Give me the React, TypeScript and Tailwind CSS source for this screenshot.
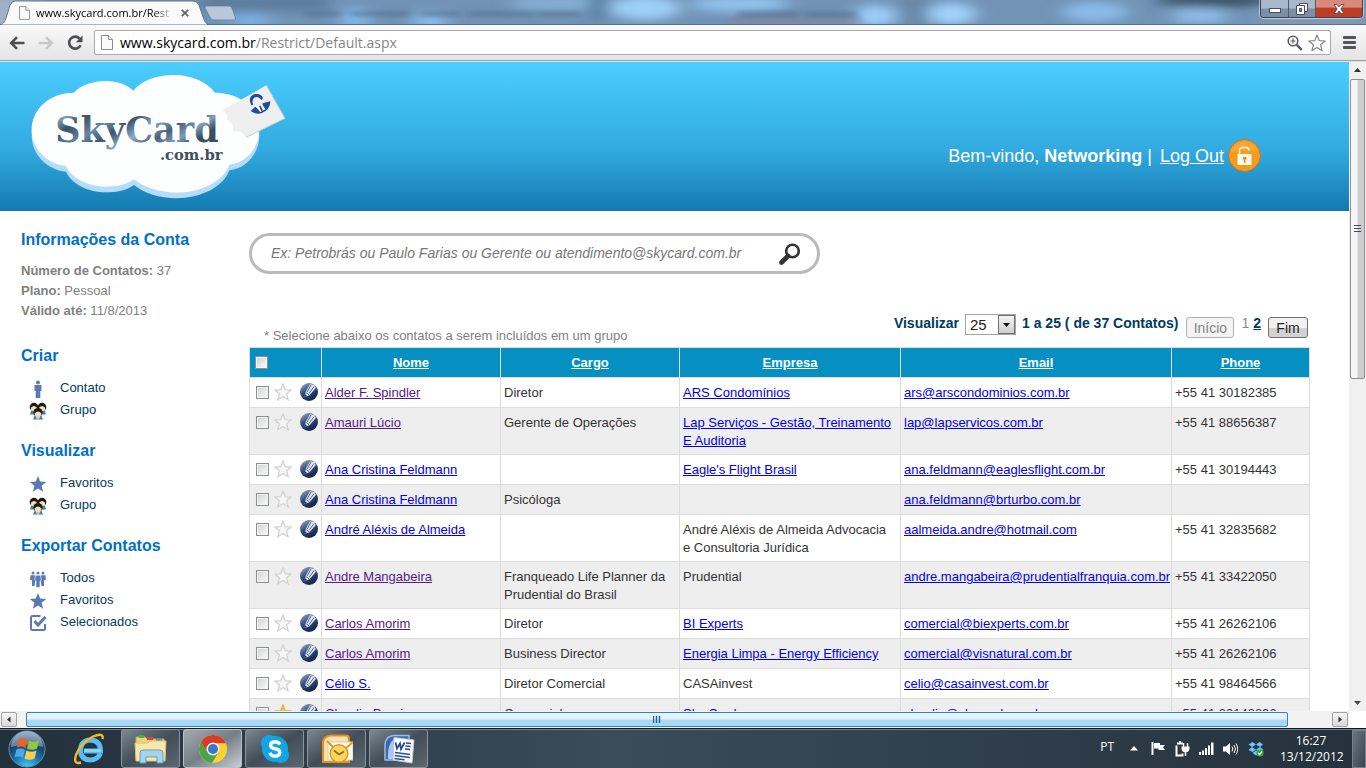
import type { ReactNode } from 'react';

interface Contact {
  name: string;
  role?: string;
  company?: string;
  companyLink?: boolean;
  email: string;
  phone: string;
  visited?: boolean;
  favourite?: boolean;
}

const contacts: Contact[] = [
  { name: 'Alder F. Spindler', role: 'Diretor', company: 'ARS Condomínios', companyLink: true, email: 'ars@arscondominios.com.br', phone: '+55 41 30182385', visited: true },
  { name: 'Amauri Lúcio', role: 'Gerente de Operações', company: 'Lap Serviços - Gestão, Treinamento E Auditoria', companyLink: true, email: 'lap@lapservicos.com.br', phone: '+55 41 88656387', visited: true },
  { name: 'Ana Cristina Feldmann', company: "Eagle's Flight Brasil", companyLink: true, email: 'ana.feldmann@eaglesflight.com.br', phone: '+55 41 30194443' },
  { name: 'Ana Cristina Feldmann', role: 'Psicóloga', email: 'ana.feldmann@brturbo.com.br', phone: '' },
  { name: 'André Aléxis de Almeida', company: 'André Aléxis de Almeida Advocacia e Consultoria Jurídica', email: 'aalmeida.andre@hotmail.com', phone: '+55 41 32835682' },
  { name: 'Andre Mangabeira', role: 'Franqueado Life Planner da Prudential do Brasil', company: 'Prudential', email: 'andre.mangabeira@prudentialfranquia.com.br', phone: '+55 41 33422050', visited: true },
  { name: 'Carlos Amorim', role: 'Diretor', company: 'BI Experts', companyLink: true, email: 'comercial@biexperts.com.br', phone: '+55 41 26262106', visited: true },
  { name: 'Carlos Amorim', role: 'Business Director', company: 'Energia Limpa - Energy Efficiency', companyLink: true, email: 'comercial@visnatural.com.br', phone: '+55 41 26262106', visited: true },
  { name: 'Célio S.', role: 'Diretor Comercial', company: 'CASAinvest', email: 'celio@casainvest.com.br', phone: '+55 41 98464566' },
  { name: 'Claudio Pereira', role: 'Comercial', company: 'Sky Card', companyLink: true, email: 'claudio@skycard.com.br', phone: '+55 41 30143896', visited: true, favourite: true },
];

const STAR = 'M9 1 L11.2 6.6 L17.2 7 L12.6 10.8 L14.1 16.7 L9 13.4 L3.9 16.7 L5.4 10.8 L0.8 7 L6.8 6.6 Z';
const CLOUD =
  'M95 210C95 150 145 98 222 98C240 76 280 63 318 63C350 63 382 74 400 92C425 62 470 45 520 45C575 45 620 65 645 98C720 98 778 145 778 210C778 260 740 310 688 314C670 365 600 398 530 398C480 398 430 382 402 358C380 374 350 380 318 380C265 380 215 355 198 318C140 312 95 265 95 210Z';

/* ---------- browser frame ---------- */

function PageIcon({ className }: { className?: string }) {
  return (
    <svg viewBox="0 0 12 15" className={className} fill="#fafafa" stroke="#8d8d8d">
      <path d="M.5.5h7l4 4v10H.5z" />
      <path d="M7.5.5v4h4" />
    </svg>
  );
}

function GlassBackdrop() {
  return (
    <svg className="absolute inset-0 h-full w-full" viewBox="0 0 1366 25" preserveAspectRatio="none">
      <defs>
        <filter id="glass" x="-20%" y="-80%" width="140%" height="260%">
          <feGaussianBlur stdDeviation="9 5" />
        </filter>
        <filter id="smudge" x="-20%" y="-80%" width="140%" height="260%">
          <feGaussianBlur stdDeviation="4 2" />
        </filter>
      </defs>
      <rect width="1366" height="25" fill="#7193b6" />
      <g filter="url(#glass)">
        <rect x="-20" y="-5" width="60" height="35" fill="#a2b0c6" />
        <rect x="200" y="-5" width="130" height="16" fill="#5d7d9d" />
        <ellipse cx="250" cy="20" rx="22" ry="6" fill="#7fb5ea" />
        <ellipse cx="355" cy="18" rx="16" ry="10" fill="#86bbee" />
        <ellipse cx="430" cy="20" rx="18" ry="8" fill="#8cc0ee" />
        <ellipse cx="560" cy="4" rx="50" ry="8" fill="#85aed6" />
        <rect x="590" y="-5" width="18" height="24" fill="#54789c" />
        <ellipse cx="645" cy="8" rx="36" ry="12" fill="#9fcff8" />
        <ellipse cx="740" cy="4" rx="50" ry="8" fill="#92c3ee" />
        <ellipse cx="875" cy="16" rx="22" ry="11" fill="#9ccdf8" />
        <rect x="900" y="-5" width="28" height="34" fill="#6887a6" />
        <ellipse cx="952" cy="14" rx="24" ry="11" fill="#a2d3fb" />
        <ellipse cx="1095" cy="12" rx="34" ry="10" fill="#8bbbe8" />
        <ellipse cx="1200" cy="16" rx="28" ry="8" fill="#8fbce8" />
        <ellipse cx="1215" cy="0" rx="60" ry="7" fill="#39505f" />
        <rect x="1260" y="8" width="110" height="20" fill="#8199b4" />
      </g>
      <g filter="url(#smudge)" fill="#4e6b8a" opacity=".5">
        <rect x="304" y="11" width="38" height="6" />
        <rect x="350" y="11" width="60" height="6" />
        <rect x="420" y="11" width="40" height="6" />
        <rect x="468" y="11" width="66" height="6" />
        <rect x="537" y="11" width="44" height="6" />
        <rect x="738" y="11" width="60" height="7" />
        <rect x="804" y="11" width="54" height="7" />
        <rect x="732" y="18" width="130" height="5" fill="#8a7c98" />
      </g>
      <rect y="24" width="1366" height="1" fill="#54718f" />
    </svg>
  );
}

function TitleBar() {
  return (
    <div className="relative flex h-[25px] shrink-0 justify-between overflow-hidden">
      <GlassBackdrop />
      <div className="relative flex">
        <div className="relative flex h-[25px] w-[207px] items-center pl-[19px]">
          <svg viewBox="0 0 207 25" className="absolute inset-0 h-full w-full">
            <path d="M0 25C4 24 5 21 7 15L10 5Q12 1 15 1H193Q197 1 199 5L203 17Q205 24 209 25Z" fill="#fafafa" stroke="#5b7590" strokeWidth="1" />
          </svg>
          <PageIcon className="relative h-[14px] w-[11px]" />
          <span className="relative ml-[6px] w-[138px] text-[11px] leading-4 whitespace-nowrap text-black [mask-image:linear-gradient(to_right,black_85%,transparent)]">
            www.skycard.com.br/Rest
          </span>
          <button aria-label="Fechar aba" className="relative ml-[7px]">
            <svg viewBox="0 0 8 8" className="h-2 w-2" stroke="#666" strokeWidth="1.8">
              <path d="M.8.8l6.4 6.4M7.2.8L.8 7.2" />
            </svg>
          </button>
        </div>
        <button aria-label="Nova aba" className="-ml-[4px]">
          <svg viewBox="0 0 34 25" className="h-[25px] w-[34px]">
            <path d="M3 6h23q2 0 3 2l3.500 10q.8 2-1.500 2H11q-2.500 0-3.500-2L2 8q-.5-2 1-2z" fill="#b9c7d9" stroke="#63809d" strokeWidth=".8" />
          </svg>
        </button>
      </div>
      <div className="relative mr-[3px] flex h-[18px] rounded-b-[4px] border border-t-0 border-[#37424f] shadow-[0_0_0_1px_rgba(255,255,255,0.5)]">
        <button aria-label="Minimizar" className="flex w-[28px] items-center justify-center rounded-bl-[3px] border-r border-[#4d5d70] bg-linear-to-b from-[#a9b8ca] from-45% to-[#7c8fa6] to-55%">
          <svg viewBox="0 0 12 5" className="mt-1 h-[5px] w-3"><rect x=".5" y=".5" width="11" height="4" fill="#fff" stroke="#45505e" /></svg>
        </button>
        <button aria-label="Restaurar" className="flex w-[27px] items-center justify-center border-r border-[#4d5d70] bg-linear-to-b from-[#a9b8ca] from-45% to-[#7c8fa6] to-55%">
          <svg viewBox="0 0 12 12" className="h-3 w-3" fill="#fff" stroke="#45505e">
            <path d="M3.500.5h8v8h-8z" />
            <path d="M.5 2.500h8v9h-8z" />
            <path d="M3.500 5.500h2v3h-2z" fill="#7c8fa6" />
          </svg>
        </button>
        <button aria-label="Fechar" className="flex w-[46px] items-center justify-center rounded-br-[3px] bg-linear-to-b from-[#d98a7c] from-40% to-[#bd3e25] to-50%">
          <svg viewBox="0 0 12 10" className="h-[10px] w-3">
            <path d="M1 .5h3L6 3 8 .5h3L7.800 5 11 9.500H8L6 7 4 9.500H1L4.200 5z" fill="#fff" stroke="#5a3d40" strokeWidth=".8" />
          </svg>
        </button>
      </div>
    </div>
  );
}

function Toolbar() {
  return (
    <div className="flex h-9 shrink-0 items-center border-b border-[#a0a0a0] bg-linear-to-b from-[#fafafa] to-[#e4e4e4] pr-[10px] pl-[9px]">
      <button aria-label="Voltar" className="w-[29px]">
        <svg viewBox="0 0 16 14" className="h-[14px] w-4" fill="none" stroke="#4f4f53" strokeWidth="2.600">
          <path d="M15.500 7H3M8 1.200L2.200 7 8 12.800" />
        </svg>
      </button>
      <button aria-label="Avançar" className="w-[29px]">
        <svg viewBox="0 0 16 14" className="h-[14px] w-4" fill="none" stroke="#c9c9c9" strokeWidth="2.600">
          <path d="M.5 7H13M8 1.200L13.800 7 8 12.800" />
        </svg>
      </button>
      <button aria-label="Recarregar" className="w-[27px]">
        <svg viewBox="0 0 16 16" className="h-4 w-4">
          <path d="M12.600 3.600A6 6 0 1 0 13.600 10.200" fill="none" stroke="#4f4f53" strokeWidth="2.600" />
          <path d="M15.500.5v6.700H8.800z" fill="#4f4f53" />
        </svg>
      </button>
      <div className="flex h-[25px] flex-1 items-center rounded-[2px] border border-[#a9a9a9] bg-white pr-1 pl-[6px]">
        <PageIcon className="h-[15px] w-3" />
        <div className="ml-[7px] flex-1 text-[14px] leading-5 text-[#858585]">
          <span className="text-black">www.skycard.com.br</span>/Restrict/Default.aspx
        </div>
        <button aria-label="Zoom">
          <svg viewBox="0 0 16 16" className="h-4 w-4" fill="none" stroke="#5a5a66">
            <circle cx="6" cy="6" r="4.800" strokeWidth="1.600" />
            <path d="M6 3.500v5M3.500 6h5" strokeWidth="1.200" />
            <path d="M9.800 9.800l5 5" strokeWidth="2.400" />
          </svg>
        </button>
        <button aria-label="Adicionar aos favoritos" className="ml-[5px]">
          <svg viewBox="0 0 18 18" className="h-[18px] w-[18px]" fill="#fff" stroke="#85858c" strokeWidth="1.200" strokeLinejoin="round">
            <path d={STAR} />
          </svg>
        </button>
      </div>
      <button aria-label="Menu" className="ml-3">
        <svg viewBox="0 0 13 13" className="h-[13px] w-[13px]" fill="#55555a">
          <rect width="13" height="3" rx="1" />
          <rect y="5" width="13" height="3" rx="1" />
          <rect y="10" width="13" height="3" rx="1" />
        </svg>
      </button>
    </div>
  );
}

/* ---------- site header ---------- */

function Logo() {
  return (
    <svg viewBox="0 6 960 447" className="h-[149px] w-[320px]" role="img" aria-label="SkyCard.com.br">
      <defs>
        <linearGradient id="steel" x1="0" y1="0" x2="1" y2="0.4">
          <stop offset="0" stopColor="#5d7286" />
          <stop offset=".1" stopColor="#7fa3c4" />
          <stop offset=".22" stopColor="#3c5163" />
          <stop offset=".38" stopColor="#6688a8" />
          <stop offset=".5" stopColor="#3f566b" />
          <stop offset=".64" stopColor="#86abcd" />
          <stop offset=".78" stopColor="#4b6178" />
          <stop offset=".9" stopColor="#7c9ebd" />
          <stop offset="1" stopColor="#3b4f61" />
        </linearGradient>
      </defs>
      <path d={CLOUD} fill="#b4dcfd" transform="translate(0 17)" />
      <path d={CLOUD} fill="#fdfefe" />
      <path d="M668 150L799 76L855 175L738 232L728 220Q716 208 700 214Q702 188 680 178Q686 162 668 150Z" fill="#efeff0" />
      <path d="M799 76L855 175L738 232" fill="none" stroke="#c3cbd2" strokeWidth="3" />
      {/* little business man on the card */}
      <path d="M754 136Q742 112 762 103Q782 98 789 114L784 120Q774 106 762 114Q754 122 760 134Z" fill="#1d4da1" />
      <path d="M752 153L766 140L782 149L788 130L811 124Q811 150 784 160Q766 164 752 153Z" fill="#1d4da1" />
      <path d="M768 141L786 132L796 148L781 156Z" fill="#fff" />
      <path d="M777 138L781 136L789 151L784 154Z" fill="#1d4da1" />
      <text x="166" y="247" fill="url(#steel)" className="font-['DejaVu_Serif',serif] text-[105px] font-bold">SkyCard</text>
      <text x="480" y="299" fill="#3e4f5f" className="font-['DejaVu_Serif',serif] text-[44px] font-bold">.com.br</text>
    </svg>
  );
}

function LockBadge() {
  return (
    <svg viewBox="0 0 33 33" className="h-[33px] w-[33px]">
      <circle cx="16.500" cy="16.500" r="16" fill="#f89a1c" stroke="#a87a45" />
      <path d="M3 13A14 14 0 0 1 30 13Q16 9 3 13z" fill="#fbb04e" opacity=".6" />
      <path d="M11.500 15V11.500Q11.500 8.500 15 8.500H18Q21 8.500 21 11.500" fill="none" stroke="#fff6e0" strokeWidth="1.600" />
      <path d="M9.500 15h14v11h-14z" fill="#fffaf0" />
      <path d="M15 18h3.500v2.500h-1V24h-1.500v-3.500h-1z" fill="#f08a10" />
    </svg>
  );
}

function SiteHeader() {
  return (
    <header className="flex h-[150px] items-center justify-between border-t border-[#d3ecf8] bg-linear-to-b from-[#4bceff] via-[#31aadf] via-60% to-[#1279b0] pr-[88px]">
      <Logo />
      <div className="mt-[38px] flex items-center text-[18px] leading-6 text-white">
        <span>
          Bem-vindo, <b>Networking</b> |
        </span>
        <a href="#logout" className="ml-2 underline">Log Out</a>
        <span className="ml-1"><LockBadge /></span>
      </div>
    </header>
  );
}

/* ---------- sidebar ---------- */

function PersonIcon() {
  return (
    <svg viewBox="0 0 18 18" className="h-[18px] w-[18px]" fill="#5b7ab4">
      <circle cx="9" cy="2.500" r="1.900" />
      <path d="M5.500 5h7v6h-1.200v7H6.700v-7H5.500z" />
    </svg>
  );
}

function PeopleIcon() {
  return (
    <svg viewBox="0 0 18 18" className="h-[18px] w-[18px]" fill="#5b7ab4">
      <circle cx="4" cy="3" r="1.500" />
      <circle cx="9" cy="3" r="1.500" />
      <circle cx="14" cy="3" r="1.500" />
      <path d="M1.500 5.200h4.800v5.300L5.600 16H3V10.500L1 9.500zM11.700 5.200h4.800l.5 4.300-2 1v5.500h-2.600l-.7-5.500z" />
      <path d="M6.300 5.200h5.400l.5 5-1.200 1V17.500H7v-6.300l-1.200-1z" stroke="#fff" strokeWidth=".6" />
    </svg>
  );
}

function GroupIcon() {
  return (
    <svg viewBox="0 0 18 18" className="h-[18px] w-[18px]">
      <path d="M1 12.500h4V9H2zM17 12.500h-4V9h3zM4 17.500h10l-1.500-3.500h-7z" fill="#2b86cf" />
      <circle cx="5" cy="5" r="4.300" fill="#1e1a18" />
      <circle cx="13" cy="5" r="4.300" fill="#1e1a18" />
      <path d="M2 5.500Q5 2.500 7.800 5.500V9Q5 10.500 2 8z" fill="#fbdcae" />
      <path d="M16 5.500Q13 2.500 10.200 5.500V9Q13 10.500 16 8z" fill="#fbdcae" />
      <circle cx="9" cy="10.600" r="4.600" fill="#1e1a18" />
      <path d="M5.500 11.500Q9 7.500 12.500 11.500Q12 15.500 9 15.700Q6 15.500 5.500 11.500z" fill="#fbdcae" />
      <path d="M7 15h4l-.8 2.500H7.800z" fill="#f1c07f" />
    </svg>
  );
}

function StarIcon() {
  return (
    <svg viewBox="0 0 18 18" className="h-[18px] w-[18px]" fill="#5b7ab4">
      <path d={STAR} />
    </svg>
  );
}

function TickIcon() {
  return (
    <svg viewBox="0 0 18 18" className="h-[18px] w-[18px]" fill="none" stroke="#5b7ab4" strokeWidth="2">
      <path d="M11.500 2H3.500Q2 2 2 3.500v11Q2 16 3.500 16h11Q16 16 16 14.500V10" />
      <path d="M5.500 7l3.500 4 7.500-8" strokeWidth="3" />
    </svg>
  );
}

function SideLink({ icon, children }: { icon: ReactNode; children: ReactNode }) {
  return (
    <li>
      <a href="#menu" className="flex h-[22px] items-center gap-[13px] pl-2 text-[#003a63]">
        <span className="mt-[2px]">{icon}</span>
        {children}
      </a>
    </li>
  );
}

function SideSection({ title, children }: { title: string; children: ReactNode }) {
  return (
    <section className="mb-5">
      <h2 className="mb-[11px] text-[16px] leading-5 font-bold text-[#006fc5]">{title}</h2>
      {children}
    </section>
  );
}

function Sidebar() {
  return (
    <aside className="w-[249px] shrink-0 pt-[19px] pl-[21px]">
      <SideSection title="Informações da Conta">
        <div className="pb-[5px] leading-5 text-[#808080]">
          <p><b>Número de Contatos:</b> 37</p>
          <p><b>Plano:</b> Pessoal</p>
          <p><b>Válido até:</b> 11/8/2013</p>
        </div>
      </SideSection>
      <SideSection title="Criar">
        <ul>
          <SideLink icon={<PersonIcon />}>Contato</SideLink>
          <SideLink icon={<GroupIcon />}>Grupo</SideLink>
        </ul>
      </SideSection>
      <SideSection title="Visualizar">
        <ul>
          <SideLink icon={<StarIcon />}>Favoritos</SideLink>
          <SideLink icon={<GroupIcon />}>Grupo</SideLink>
        </ul>
      </SideSection>
      <SideSection title="Exportar Contatos">
        <ul>
          <SideLink icon={<PeopleIcon />}>Todos</SideLink>
          <SideLink icon={<StarIcon />}>Favoritos</SideLink>
          <SideLink icon={<TickIcon />}>Selecionados</SideLink>
        </ul>
      </SideSection>
    </aside>
  );
}

/* ---------- contacts ---------- */

function SearchBox() {
  return (
    <form className="flex h-[41px] w-[571px] items-center rounded-full border-[3px] border-[#b9bbbb] pr-4 pl-[19px]">
      <input
        type="text"
        aria-label="Buscar contatos"
        placeholder="Ex: Petrobrás ou Paulo Farias ou Gerente ou atendimento@skycard.com.br"
        className="min-w-0 flex-1 text-[14px] italic outline-none placeholder:text-[#777]"
      />
      <button type="button" aria-label="Buscar" className="ml-2">
        <svg viewBox="0 0 22 22" className="h-[22px] w-[22px]" fill="none" stroke="#333">
          <circle cx="13.500" cy="8" r="6.300" strokeWidth="2.600" />
          <path d="M9 13L2.500 19.500" strokeWidth="4.600" strokeLinecap="round" />
        </svg>
      </button>
    </form>
  );
}

function Pager() {
  return (
    <div className="flex items-start pr-[2px] text-[14px] leading-[18px] font-bold text-[#003a63]">
      <label htmlFor="page-size">Visualizar</label>
      <div className="relative mx-[6px]">
        <select id="page-size" defaultValue="25" className="block h-[21px] w-[51px] appearance-none border border-[#a0a4a8] bg-white pl-1 text-[15px] font-normal text-[#222]">
          <option>25</option>
        </select>
        <span className="pointer-events-none absolute top-px right-px flex h-[19px] w-[17px] items-center justify-center border border-[#707070] bg-linear-to-b from-[#f4f4f4] to-[#cfcfcf]">
          <svg viewBox="0 0 7 4" className="h-1 w-[7px]"><path d="M0 0h7L3.500 4z" fill="#111" /></svg>
        </span>
      </div>
      <span>1 a 25 ( de 37 Contatos)</span>
      <button disabled className="mt-[3px] ml-2 h-[21px] w-12 rounded-[3px] border border-[#adb2b5] bg-[#f4f4f4] text-[14px] leading-[18px] font-normal text-[#838383]">Início</button>
      <span className="ml-[7px] font-normal text-[#8a8a8a]">1</span>
      <a href="#page2" className="ml-1 underline">2</a>
      <button className="mt-[3px] ml-[7px] h-[21px] w-10 rounded-[3px] border border-[#707070] bg-linear-to-b from-[#f2f2f2] from-50% to-[#d2d2d2] to-55% text-[14px] leading-[18px] font-normal text-[#222]">Fim</button>
    </div>
  );
}

function TickBox({ label }: { label: string }) {
  return (
    <input
      type="checkbox"
      aria-label={label}
      className="block h-[13px] w-[13px] appearance-none border border-[#8e8f8f] bg-linear-to-br from-[#cfd1d3] to-[#fbfbfb] shadow-[inset_0_0_0_1px_#f4f4f4]"
    />
  );
}

function EditBadge() {
  return (
    <svg viewBox="0 0 18 18" className="h-[18px] w-[18px]">
      <defs>
        <linearGradient id="badge" x1=".1" y1="0" x2=".7" y2="1">
          <stop offset="0" stopColor="#9aa9c2" />
          <stop offset=".45" stopColor="#34507f" />
          <stop offset="1" stopColor="#0f1f45" />
        </linearGradient>
      </defs>
      <circle cx="9" cy="9" r="9" fill="url(#badge)" />
      <path d="M4.500 14L5.800 8.800 10 1.200 14.500 2 15.800 5 9.500 12.300z" fill="#dfe6f0" />
      <path d="M7.200 9L11 2M9 10.500L14 3.500" stroke="#54698f" strokeWidth="1" />
      <path d="M6.200 9.500l3 2.500" stroke="#2f4672" strokeWidth=".8" />
      <path d="M4.500 14l.7-2.800 1.800 1.800z" fill="#182c55" />
    </svg>
  );
}

function ContactTable() {
  return (
    <table className="w-full table-fixed border-collapse leading-[18px] text-[#333]">
      <colgroup>
        <col className="w-[72px]" />
        <col className="w-[179px]" />
        <col className="w-[179px]" />
        <col className="w-[221px]" />
        <col className="w-[271px]" />
        <col />
      </colgroup>
      <thead>
        <tr className="h-[30px] bg-[#0590c1] text-white">
          <th className="border border-[#dcdcdc] pl-[5px]">
            <TickBox label="Selecionar todos" />
          </th>
          {['Nome', 'Cargo', 'Empresa', 'Email', 'Phone'].map((title) => (
            <th key={title} className="border border-[#dcdcdc]">
              <a href="#sort" className="underline">{title}</a>
            </th>
          ))}
        </tr>
      </thead>
      <tbody>
        {contacts.map((c, i) => (
          <tr key={i} className="align-top even:bg-[#eee]">
            <td className="border border-[#dcdcdc] pt-[5px] pb-[6px] pl-[6px]">
              <div className="flex h-[18px] items-center">
                <TickBox label={`Selecionar ${c.name}`} />
                <button aria-label={`Favoritar ${c.name}`} className="ml-[5px]">
                  <svg viewBox="0 0 18 18" className="h-[18px] w-[18px]" strokeWidth="1.300" fill={c.favourite ? '#f6c74b' : '#f6f6f6'} stroke={c.favourite ? '#e3b23a' : '#d2d2d2'}>
                    <path d={STAR} />
                  </svg>
                </button>
                <button aria-label={`Editar ${c.name}`} className="ml-2">
                  <EditBadge />
                </button>
              </div>
            </td>
            <td className="border border-[#dcdcdc] px-[3px] pt-[6px] pb-1">
              <a href="#contact" className={c.visited ? 'text-[#551a8b] underline' : 'text-[#0000ee] underline'}>{c.name}</a>
            </td>
            <td className="border border-[#dcdcdc] px-[3px] pt-[6px] pb-1">{c.role}</td>
            <td className="border border-[#dcdcdc] pt-[6px] pr-[6px] pb-1 pl-[3px]">
              {c.companyLink ? <a href="#company" className="text-[#0000ee] underline">{c.company}</a> : c.company}
            </td>
            <td className="border border-[#dcdcdc] px-[3px] pt-[6px] pb-1">
              <a href={`mailto:${c.email}`} className="text-[#0000ee] underline">{c.email}</a>
            </td>
            <td className="border border-[#dcdcdc] px-[3px] pt-[6px] pb-1">{c.phone}</td>
          </tr>
        ))}
      </tbody>
    </table>
  );
}

/* ---------- scroll bars ---------- */

function VerticalBar() {
  return (
    <div className="flex w-[17px] shrink-0 flex-col items-center border-t border-[#ddd] bg-[#f0f0f0]">
      <svg viewBox="0 0 17 17" className="h-[17px] w-[17px] shrink-0"><path d="M5 10l3.500-4 3.500 4z" fill="#333" /></svg>
      <div className="flex w-[15px] grow-[298] basis-0 items-center justify-center rounded-[2px] border border-[#8f8f8f] bg-linear-to-r from-[#f6f6f6] from-45% to-[#cdcdcf] to-55%">
        <svg viewBox="0 0 7 8" className="h-2 w-[7px]"><path d="M0 .5h7M0 3.500h7M0 6.500h7" stroke="#444b55" /></svg>
      </div>
      <div className="grow-[316] basis-0" />
      <svg viewBox="0 0 17 17" className="h-[17px] w-[17px] shrink-0"><path d="M5 7l3.500 4 3.500-4z" fill="#444" /></svg>
    </div>
  );
}

function HorizontalBar() {
  return (
    <div className="flex h-[17px] shrink-0 items-center bg-[#f2f2f2]">
      <button aria-label="Rolar para a esquerda" className="ml-px h-[15px] w-4 rounded-[2px] border border-[#a2a2a2] bg-linear-to-b from-[#f6f6f6] to-[#d9d9d9]">
        <svg viewBox="0 0 14 13" className="h-[13px] w-[14px]"><path d="M8.500 3.500v6L5 6.500z" fill="#333" /></svg>
      </button>
      <div className="mr-[44px] ml-[9px] flex h-[15px] flex-1 items-center justify-center rounded-[2px] border border-[#3c7fb1] bg-linear-to-b from-[#e2f3fd] from-48% to-[#a7d9f6] to-52%">
        <svg viewBox="0 0 8 8" className="h-2 w-2"><path d="M.5 0v7M3.500 0v7M6.500 0v7" stroke="#1f5f92" strokeWidth="1.400" /></svg>
      </div>
      <button aria-label="Rolar para a direita" className="h-[15px] w-4 rounded-[2px] border border-[#a2a2a2] bg-linear-to-b from-[#f6f6f6] to-[#d9d9d9]">
        <svg viewBox="0 0 14 13" className="h-[13px] w-[14px]"><path d="M5.500 3.500v6L9 6.500z" fill="#333" /></svg>
      </button>
      <div className="ml-px h-full w-[17px] bg-white" />
    </div>
  );
}

/* ---------- taskbar ---------- */

function StartOrb() {
  return (
    <svg viewBox="0 0 38 38" className="h-[38px] w-[38px]">
      <defs>
        <radialGradient id="orb" cx=".5" cy="1" r=".95">
          <stop offset="0" stopColor="#3fd0fb" />
          <stop offset=".4" stopColor="#1a76ad" />
          <stop offset=".75" stopColor="#173c60" />
          <stop offset="1" stopColor="#6f8da8" />
        </radialGradient>
      </defs>
      <circle cx="19" cy="19" r="18" fill="url(#orb)" stroke="#6d8ba3" />
      <path d="M3 17A16 16 0 0 1 35 17Q19 12 3 17z" fill="#c8dbe9" opacity=".45" />
      <path d="M11 9Q15 7 19.500 10L17.500 18Q13.500 15.500 9 17.500z" fill="#ee6028" />
      <path d="M21 10.500Q25.500 13 31 10.500L29 18.500Q24 21 19 18.500z" fill="#93c83f" />
      <path d="M8.500 19.500Q12.500 17.500 17 20L15 28Q11 25.500 6.500 27.500z" fill="#4ba9e8" />
      <path d="M18.500 20.500Q23.500 23 28.500 20.500L26.500 28.500Q21.500 31 16.500 28.500z" fill="#fcd04a" />
    </svg>
  );
}

function ExplorerE() {
  return (
    <svg viewBox="0 0 32 32" className="h-8 w-8" fill="none">
      <path d="M27.500 20.500Q24.500 27 17 27Q7.500 26.500 7.500 17Q8 7.500 17.500 7Q27.500 7.500 27.500 18H11" stroke="#59bdf2" strokeWidth="5" />
      <path d="M11 17.500h17" stroke="#8fd8fb" strokeWidth="2.500" />
      <path d="M8 29.500Q0 32 3 22Q8 9.500 20 3.500Q31-1 29.500 6" stroke="#f8b91c" strokeWidth="2.400" />
    </svg>
  );
}

function FolderArt() {
  return (
    <svg viewBox="0 0 34 30" className="h-[30px] w-[34px]">
      <path d="M2 3h9l2 2h17v21H2z" fill="#ecd27c" stroke="#c9a64b" />
      <path d="M5 1h5v3H5z" fill="#3ab54a" />
      <path d="M13 3h6v3h-6z" fill="#d84437" />
      <path d="M22 5h6v3h-6z" fill="#3f97dd" />
      <path d="M1 9h13l2-2h16l-1 20H2z" fill="#fae9a6" stroke="#dcc06c" />
      <path d="M6 29V19q0-3 3-3h17q3 0 3 3v10h-6v-6H12v6z" fill="#a5d4ef" stroke="#5c9fc9" />
    </svg>
  );
}

function ChromeArt() {
  return (
    <svg viewBox="0 0 30 30" className="h-[30px] w-[30px]">
      <circle cx="15" cy="15" r="14" fill="#fbd22f" />
      <path d="M2.900 8A14 14 0 0 0 14 29L20.500 18.200 15 15 9.600 18z" fill="#4aa54a" />
      <path d="M2.900 8A14 14 0 0 1 27.800 9.200H15L9.600 18z" fill="#d93b2b" />
      <circle cx="15" cy="15" r="6.500" fill="#f2f2f2" />
      <circle cx="15" cy="15" r="5" fill="#3a78c4" />
    </svg>
  );
}

function SkypeArt() {
  return (
    <svg viewBox="0 0 30 30" className="h-[30px] w-[30px]">
      <circle cx="9" cy="9" r="8" fill="#12a5e6" />
      <circle cx="21" cy="21" r="8" fill="#12a5e6" />
      <circle cx="15" cy="15" r="13" fill="#12a5e6" />
      <path d="M20 10.500Q18.500 7.800 15 7.800Q10.500 8 10.500 11.300Q10.800 14 15 14.800Q19.800 15.500 19.800 18.500Q19.500 22 15 22.200Q11 22.200 9.800 18.800" fill="none" stroke="#fff" strokeWidth="3.400" />
    </svg>
  );
}

function OutlookArt() {
  return (
    <svg viewBox="0 0 32 30" className="h-[30px] w-8">
      <path d="M2 28V8Q3 2 10 1.500h15q3 0 3 3V28z" fill="#fde0b0" stroke="#ee8d14" strokeWidth="2" />
      <path d="M7 8h25v18H7z" fill="#fdfdf8" stroke="#d8ccb5" />
      <path d="M6 7l8 8M32 8l-8 7" stroke="#ec9718" strokeWidth="2" />
      <circle cx="18" cy="19.500" r="8.800" fill="#fcd65e" stroke="#d99a1e" strokeWidth="1.500" />
      <path d="M13 16.500l5 4 5-3" fill="none" stroke="#9b6a10" strokeWidth="1.700" />
    </svg>
  );
}

function WordArt() {
  return (
    <svg viewBox="0 0 32 30" className="h-[30px] w-8">
      <path d="M2 26V10Q3 2 11 1.500h15v24.500z" fill="#3a68b0" stroke="#9bbbe6" strokeWidth="1.500" />
      <path d="M5 25Q4 8 13 4v21z" fill="#a8c6ef" />
      <path d="M11 3.500l20 2.500-2 23-19-3z" fill="#fbfcfe" stroke="#bdc9db" />
      <path d="M12.500 8.500l1.500 6 3-5 1 5.500 3.500-6.500" fill="none" stroke="#274f94" strokeWidth="1.800" />
      <path d="M23 9l5 .5M22.500 12l5 .5M22 15l5 .5M12 18.500l15 2M11.800 21.500l15 2M11.500 24.500l10 1.300" stroke="#274f94" strokeWidth="1.600" />
    </svg>
  );
}

function TaskButton({ label, active, children }: { label: string; active?: boolean; children: ReactNode }) {
  return (
    <button
      aria-label={label}
      className={
        active
          ? 'flex h-[39px] w-[59px] items-center justify-center rounded-[3px] border border-[#b9c1c8] bg-linear-to-br from-[#a3abb2] via-[#767f88] to-[#c8cdd1]'
          : 'flex h-[39px] w-[59px] items-center justify-center rounded-[3px] border border-[#8a959e] bg-linear-to-br from-[#7d8891] via-[#414d57] to-[#5b6872]'
      }
    >
      {children}
    </button>
  );
}

function Tray() {
  return (
    <div className="flex h-full items-center text-[12px] leading-4 text-white">
      <span className="mb-1">PT</span>
      <svg viewBox="0 0 8 5" className="ml-4 h-[5px] w-2"><path d="M0 4.500L4 0l4 4.500z" fill="#fff" /></svg>
      <svg viewBox="0 0 15 15" className="ml-[13px] h-[15px] w-[15px]">
        <path d="M1.500 1v13" stroke="#fff" strokeWidth="2" />
        <path d="M3 2h6v2h5l-2 2.500L14 9H7.500V7.500H3z" fill="#fff" />
      </svg>
      <svg viewBox="0 0 15 16" className="ml-[9px] h-4 w-[15px]" fill="none" stroke="#fff">
        <path d="M2 2.500h6M1.500 4.500v10h6v-2M4 1h2" strokeWidth="2" />
        <path d="M8.500 2v4M12.500 2v4" strokeWidth="1.500" />
        <path d="M6.500 5.500h8V8q-.5 3-4 3.500Q7 11 6.500 8z" fill="#fff" stroke="none" />
        <path d="M10.500 11v4" strokeWidth="1.500" />
      </svg>
      <svg viewBox="0 0 15 13" className="ml-[9px] h-[13px] w-[15px]" fill="#fff">
        <path d="M0 10h2v3H0zM3 8.500h2V13H3zM6 6h2v7H6zM9 3.500h2V13H9zM12 .5h2.500V13H12z" />
      </svg>
      <svg viewBox="0 0 15 14" className="ml-[9px] h-[14px] w-[15px]">
        <path d="M0 4.500h3L7 1v12L3 9.500H0z" fill="#fff" />
        <path d="M9 4.500q1.500 2.500 0 5M11 3q3 4 0 8M13 1.500q3.500 5.500 0 11" fill="none" stroke="#fff" />
      </svg>
      <svg viewBox="0 0 16 16" className="ml-[10px] h-4 w-4">
        <path d="M4.500 1L8 3.500 4 6 .5 3.500zM11.500 1L15 3.500 12 6 8 3.500zM.5 9L4 6l4 2.700L4.500 11zM8 8.700L12 6l3.500 3-4 2.200zM4.500 12L8 9.500l3.500 2.500L8 14.500z" fill="#6cc4f8" />
        <circle cx="12" cy="12" r="3.600" fill="#36a833" />
        <path d="M10 12l1.500 1.500L14 10.500" fill="none" stroke="#fff" strokeWidth="1.200" />
      </svg>
      <time className="ml-4 w-[62px] text-center">
        16:27
        <br />
        13/12/2012
      </time>
      <button aria-label="Mostrar área de trabalho" className="ml-[10px] h-[38px] w-[14px] border border-[#75818b] bg-linear-to-br from-[#6b7781] to-[#38444f]" />
    </div>
  );
}

function Taskbar() {
  return (
    <div className="flex h-10 shrink-0 items-center justify-between border-t border-[#11171d] bg-linear-to-r from-[#22303c] via-[#3a4b59] via-45% to-[#25323d] pl-2 font-['Open_Sans',sans-serif] shadow-[inset_0_1px_0_#74828d]">
      <div className="flex items-center">
        <button aria-label="Iniciar"><StartOrb /></button>
        <button aria-label="Internet Explorer" className="mr-[16px] ml-[27px]"><ExplorerE /></button>
        <div className="flex gap-[3px]">
          <TaskButton label="Explorador"><FolderArt /></TaskButton>
          <TaskButton label="Chrome" active><ChromeArt /></TaskButton>
          <TaskButton label="Skype"><SkypeArt /></TaskButton>
          <TaskButton label="Outlook"><OutlookArt /></TaskButton>
          <TaskButton label="Word"><WordArt /></TaskButton>
        </div>
      </div>
      <Tray />
    </div>
  );
}

export default function App() {
  return (
    <div className="flex h-screen flex-col overflow-hidden bg-white font-['Liberation_Sans',Arial,sans-serif] text-[13px]">
      <div className="shrink-0 font-['Open_Sans',sans-serif]">
        <TitleBar />
        <Toolbar />
      </div>
      <div className="flex min-h-0 flex-1">
        <div className="min-w-0 flex-1 overflow-hidden">
          <SiteHeader />
          <div className="flex">
            <Sidebar />
            <main className="min-w-0 flex-1 pt-[22px] pr-[39px]">
              <SearchBox />
              <div className="mt-10 flex h-[33px] justify-between">
                <p className="mb-[3px] self-end pl-[15px] leading-4 text-[#808080]">
                  * Selecione abaixo os contatos a serem incluídos em um grupo
                </p>
                <Pager />
              </div>
              <ContactTable />
            </main>
          </div>
        </div>
        <VerticalBar />
      </div>
      <HorizontalBar />
      <Taskbar />
    </div>
  );
}
